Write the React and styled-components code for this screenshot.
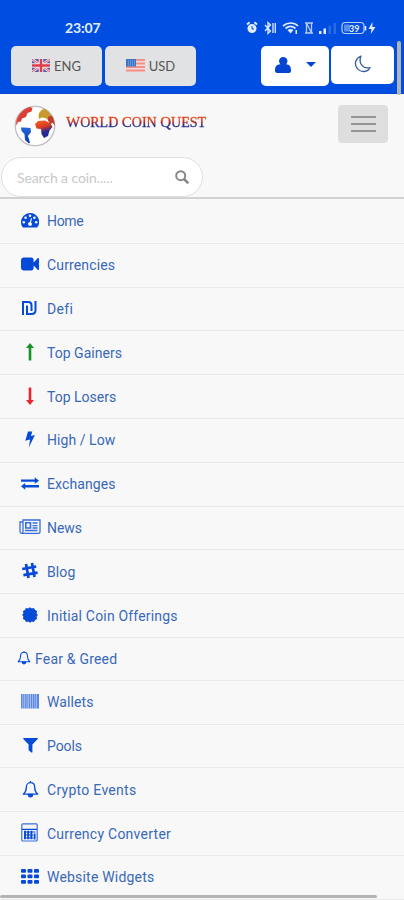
import React from "react";
import styled, { createGlobalStyle } from "styled-components";

const GlobalStyle = createGlobalStyle`
	*{
		box-sizing:border-box;
	}
	body{
		margin:0;
		background:#f8f8f8;
		font-family:"Lato", sans-serif;
	}
	button{
		padding:0;
		border:0;
		font-family:inherit;
		cursor:pointer;
	}
	svg{
		display:block;
		flex:none;
	}
`;

const Wrap = styled.div`
	position:relative;
	width:404px;
	height:900px;
	overflow:hidden;
	background:#f8f8f8;
`;
const Header = styled.header`
	height:94px;
	background:#004de2;
	border-bottom:1px solid #0b45cc;
`;
const StatusBar = styled.div`
	height:46px;
	padding:9px 26px 0 65px;
	display:flex;
	align-items:center;
	justify-content:space-between;
	color:#e4edff;
`;
const Time = styled.span`
	font-size:14px;
	font-weight:700;
	letter-spacing:-0.1px;
`;
const Toolbar = styled.div`
	display:flex;
	padding:0 10px 0 11px;
	.space{
		flex:1;
	}
`;
const ToolButton = styled.button`
	width:${({$width}) => $width}px;
	height:${({$height}) => $height || 40}px;
	margin-right:${({$gap}) => $gap || 0}px;
	padding-bottom:${({$light}) => $light ? 3 : 0}px;
	display:flex;
	align-items:center;
	justify-content:center;
	gap:4px;
	border-radius:5px;
	background:${({$light}) => $light ? "#fff" : "#e1e2e3"};
	color:${({$light}) => $light ? "#0645d2" : "#555"};
	font-size:13px;
	svg{
		margin-bottom:${({$light}) => $light ? 0 : 2}px;
	}
`;
const Brand = styled.div`
	height:63px;
	padding:0 16px 0 14px;
	display:flex;
	align-items:center;
`;
const BrandName = styled.div`
	margin:-7px 0 0 10px;
	font-family:"Liberation Serif", serif;
	font-size:14px;
	font-weight:400;
	line-height:17px;
	letter-spacing:0;
	white-space:nowrap;
	background:linear-gradient(#e0441c 32%, #a22a36 50%, #252e8c 68%);
	background-clip:text;
	-webkit-background-clip:text;
	-webkit-text-stroke:0.35px transparent;
	color:transparent;
	b{
		font-size:15px;
		font-weight:400;
	}
`;
const Burger = styled.button`
	width:50px;
	height:38px;
	margin:-4px 0 0 auto;
	display:flex;
	flex-direction:column;
	align-items:center;
	justify-content:center;
	gap:5px;
	border-radius:4px;
	background:#dedede;
	span{
		width:25px;
		height:2px;
		background:#959595;
	}
`;
const SearchBox = styled.div`
	width:202px;
	height:40px;
	margin-left:1px;
	padding:0 13px 0 15px;
	display:flex;
	align-items:center;
	justify-content:space-between;
	border:1px solid #dfdfdf;
	border-radius:20px;
	background:#fff;
	color:#c8c8c8;
	font-size:14px;
	letter-spacing:-0.1px;
`;
const Menu = styled.ul`
	margin:0;
	padding:1px 0 0;
	list-style:none;
	border-top:2px solid #d2d2d2;
`;
const Item = styled.li`
	height:${({$compact}) => $compact ? 42.8 : 43.8}px;
	padding-left:${({$compact}) => $compact ? 17 : 19}px;
	display:flex;
	align-items:center;
	border-bottom:1px solid #e9e9e9;
	color:#3868b8;
	font-family:"Roboto", sans-serif;
	font-size:14px;
	letter-spacing:${({$spacing}) => $spacing}px;
	cursor:pointer;
	.icon{
		width:${({$compact}) => $compact ? 14 : 22}px;
		margin-right:${({$compact}) => $compact ? 4 : 6}px;
		margin-top:-2px;
		display:flex;
		justify-content:center;
		color:${({$color}) => $color || "#064bd8"};
	}
`;
const ScrollThumb = styled.div`
	position:absolute;
	background:#b4b4b4;
	border-radius:2px;
	${({$vertical}) => $vertical
		? "top:41px; left:397px; width:4px; height:54px;"
		: "left:0; bottom:2px; width:377px; height:3px;"}
`;

const Svg = ({w, h, children, ...rest}) => (
	<svg width={w} height={h} viewBox={`0 0 ${w} ${h}`} fill="currentColor" {...rest}>
		{children}
	</svg>
);

const bellPath = "M8.5 1v2M8.5 2.7C5.7 2.7 4.3 4.8 4.3 7.4c0 3.4-1 5-3 6.8h14.4c-2-1.8-3-3.4-3-6.8 0-2.6-1.4-4.7-4.2-4.7Z";

const Bell = ({width = 17, height = 18}) => (
	<svg width={width} height={height} viewBox="0 0 17 18" fill="none" stroke="currentColor" strokeWidth="1.3" strokeLinejoin="round">
		<path d={bellPath} />
		<path d="M6.4 14.5a2.1 2.3 0 0 0 4.2 0Z" fill="currentColor" />
	</svg>
);

const icons = {
	home: (
		<Svg w={18} h={15}>
			<path d="M9 0a9 9 0 0 0-9 9c0 2 .6 3.7 1.5 5.1.2.3.4.4.8.4h13.4c.4 0 .6-.1.8-.4A9 9 0 0 0 9 0Z" />
			<g fill="#f8f8f8">
				<circle cx="2.8" cy="9.2" r="1.3" />
				<circle cx="4.6" cy="4.7" r="1.3" />
				<circle cx="9" cy="2.7" r="1.3" />
				<circle cx="13.4" cy="4.7" r="1.3" />
				<circle cx="15.2" cy="9.2" r="1.3" />
				<path d="m10 5 1 .3-1 4.1c1 .6 1.2 1.7.8 2.5-1 1.8-3.8 1-3.7-1 .1-1 .8-1.7 1.8-1.8Z" />
			</g>
		</Svg>
	),
	video: (
		<Svg w={18} h={14}>
			<path d="M3 .5h7a2.6 2.6 0 0 1 2.6 2.7v2.3l4-4.2c.5-.5 1.4-.2 1.4.5v10.4c0 .7-.9 1-1.4.5l-4-4.2v2.3a2.6 2.6 0 0 1-2.6 2.7H3a3 3 0 0 1-3-2.7V3.2A3 3 0 0 1 3 .5Z" />
		</Svg>
	),
	shekel: (
		<Svg w={17} h={14} fill="none" stroke="currentColor" strokeWidth="2">
			<path d="M1 14V1h5.2c2 0 3.3 1.4 3.3 3.3V10M5 4.5V13h4.8c2.2 0 3.7-1.4 3.7-3.7V0" />
		</Svg>
	),
	up: (
		<Svg w={8} h={18}>
			<path d="M4 0 8 5H5.3v12.6H2.7V5H0Z" />
		</Svg>
	),
	down: (
		<Svg w={8} h={18}>
			<path d="M4 18 0 13h2.7V.4h2.6V13H8Z" />
		</Svg>
	),
	bolt: (
		<Svg w={10} h={17}>
			<path d="M3 .5h4.300L5.900 4.900l4-1L3.800 16.500 5.100 8.600.3 9.700Z" />
		</Svg>
	),
	exchange: (
		<Svg w={18} h={13}>
			<path d="M0 2.4h13.8V.2L18 3.7l-4.2 3.1V4.8H0ZM18 8v2.4H4.2v2.3L0 9.2l4.200-3.100V8Z" />
		</Svg>
	),
	news: (
		<Svg w={22} h={16} fill="none" stroke="currentColor" strokeWidth="1.3" opacity=".8">
			<path d="M4 3H1v9.6c0 1.2.7 1.8 1.6 1.8h16.8c1 0 1.6-.7 1.6-1.6V1H4v11.4c0 1.2-.4 2-1.4 2M13.5 4h5M13.5 6.7h5M13.5 9h5M6 11.5h12.5" />
			<path d="M6.8 3.8h4.7V9H6.8Z" strokeWidth="1.6" />
		</Svg>
	),
	hash: (
		<Svg w={18} h={18} fill="none" stroke="currentColor" strokeWidth="2.7">
			<path d="m5 2 2.5 14M11 1l2.5 14M1.2 7l14-2.5M2.4 13.2l14.2-2.5" />
		</Svg>
	),
	certificate: (
		<Svg w={16} h={16}>
			<path d="m8 .2 1.8 1.2 2.1-.5 1.2 2 2 1.1-.5 2.2L15.8 8l-1.2 1.8.5 2.2-2 1.1-1.2 2-2.1-.5L8 15.8l-1.8-1.2-2.1.5-1.2-2-2-1.1.5-2.2L.2 8l1.2-1.8L.9 4l2-1.1 1.2-2 2.1.5Z" />
		</Svg>
	),
	bellSmall: <Bell width={14} height={15} />,
	barcode: (
		<Svg w={20} h={15}>
			<path d="M1 0h18v14.5H1Z" opacity=".3" />
			<path d="M1 0h1.4v14.5H1ZM3.3 0h.9v14.5h-.9ZM5.2 0h1.3v14.5H5.2ZM7.4 0h.8v14.5h-.8ZM9.1 0h1v14.5h-1ZM11 0h1v14.5h-1ZM12.8 0h1.6v14.5h-1.6ZM15.2 0h1v14.5h-1ZM17 0h2v14.5h-2Z" opacity=".5" />
		</Svg>
	),
	filter: (
		<Svg w={15} h={16}>
			<path d="M1 1h13c.7 0 1 .7.5 1.2L9.4 7.4V15c0 .6-.6.8-1 .5l-2.5-2c-.2-.2-.3-.4-.3-.7V7.4L.5 2.2C0 1.7.3 1 1 1Z" />
		</Svg>
	),
	bell: <Bell />,
	calculator: (
		<Svg w={19} h={19} fill="none" stroke="currentColor" strokeWidth="1.2">
			<rect x=".8" y=".8" width="15.4" height="17.2" rx="1" opacity=".8" />
			<path d="M1 6.4h15M3 9h11.5M3 12h9M3 15h9" />
			<path d="M4 7.8v8.5M7.2 7.8v8.5M10.4 7.8v8.5M13.6 10.5v6" strokeWidth="1.9" />
		</Svg>
	),
	grid: (
		<Svg w={18} h={15}>
			{[0, 5.5, 11].map((y) => [0, 6.5, 13].map((x) => (
				<rect key={`${x}-${y}`} x={x} y={y} width="5" height="3.7" rx=".9" />
			)))}
		</Svg>
	)
};

const menuItems = [
	{name: "Home", icon: "home", spacing: -0.3},
	{name: "Currencies", icon: "video", spacing: 0.15},
	{name: "Defi", icon: "shekel", spacing: 0.3},
	{name: "Top Gainers", icon: "up", color: "#159325", spacing: 0.03},
	{name: "Top Losers", icon: "down", color: "#ec2630", spacing: 0},
	{name: "High / Low", icon: "bolt", spacing: 0.05},
	{name: "Exchanges", icon: "exchange", spacing: 0.1},
	{name: "News", icon: "news", spacing: -0.1},
	{name: "Blog", icon: "hash", spacing: 0.1},
	{name: "Initial Coin Offerings", icon: "certificate", spacing: 0.18},
	{name: "Fear & Greed", icon: "bellSmall", spacing: 0.2, compact: true},
	{name: "Wallets", icon: "barcode", spacing: 0.1},
	{name: "Pools", icon: "filter", spacing: -0.1},
	{name: "Crypto Events", icon: "bell", spacing: 0.28},
	{name: "Currency Converter", icon: "calculator", spacing: 0.25},
	{name: "Website Widgets", icon: "grid", spacing: 0.2}
];

// alarm, vibrate, wifi, nfc, signal, battery
const StatusIcons = () => (
	<Svg w={132} h={16}>
		<circle cx="6" cy="8.5" r="4.5" />
		<path d="m1 4.5 2.6-2.2M11 4.5 8.4 2.3" stroke="currentColor" strokeWidth="1.8" />
		<path d="M6 6v3h2" fill="none" stroke="#004de2" />
		<g fill="none" stroke="currentColor" strokeWidth="1.3">
			<path d="m19 5 5.5 6-2.5 2.5V2.5L24.5 5 19 11M27 3v10M29.3 3v10" />
			<path d="M37 6c4.5-4 11-4 15 0M39.5 8.5c3-2.5 7-2.5 10 0" strokeWidth="1.7" />
			<path d="M60.500 13V3l5 10V3M59 3h8M59 13h8" opacity=".8" />
		</g>
		<path d="m44.5 13.5-3-3.5c2-1.4 4-1.4 6 0ZM49.5 10H51v4h-1.5Z" />
		<path d="M73 11h2.5v3H73ZM77.5 8.5H80V14h-2.5Z" />
		<path d="M82.5 5.5H85V14h-2.5ZM87.5 3H90v11h-2.5Z" opacity=".18" />
		<rect x="96" y="2.5" width="22" height="11" rx="3.5" fill="none" stroke="currentColor" strokeWidth="1.2" opacity=".8" />
		<rect x="98" y="4.5" width="6" height="7" rx="1" opacity=".4" />
		<path d="M119.5 6v4.5" stroke="currentColor" strokeWidth="1.5" />
		<text x="103" y="11.5" fontSize="9" fontWeight="700" fontFamily="Lato, sans-serif">39</text>
		<path d="m126.5 2-4 7h3l-.8 5 4.8-7h-3.2Z" />
	</Svg>
);

const FlagUK = () => (
	<Svg w={18} h={13}>
		<path fill="#5662a8" d="M0 0h18v13H0Z" />
		<path d="m0 0 18 13M18 0 0 13" stroke="#f5dbe0" strokeWidth="2.6" />
		<path d="m0 0 18 13M18 0 0 13" stroke="#df5260" strokeWidth=".9" />
		<path d="M9 0v13M0 6.5h18" stroke="#fae9ec" strokeWidth="4.5" />
		<path d="M9 0v13M0 6.5h18" stroke="#dd3d4a" strokeWidth="2.5" />
	</Svg>
);

const FlagUS = () => (
	<Svg w={19} h={13}>
		<path fill="#f5d8d8" d="M0 0h19v13H0Z" />
		<path d="M0 1h19M0 4.5h19M0 8h19M0 11.5h19" stroke="#f0908a" strokeWidth="1.8" />
		<path fill="#3c78c6" d="M0 0h10v7.5H0Z" />
		<path d="M2 2h7M2 4h7M2 6h7" stroke="#96bce4" strokeWidth=".8" strokeDasharray="1 1" />
	</Svg>
);

const Globe = () => (
	<Svg w={42} h={42}>
		<defs>
			<linearGradient id="north" x1="0" y1="0" x2="1" y2="1">
				<stop offset="0" stopColor="#d95545" />
				<stop offset="1" stopColor="#dc2520" />
			</linearGradient>
			<linearGradient id="south" x1="0" y1="0" x2="0" y2="1">
				<stop offset="0" stopColor="#2466dd" />
				<stop offset="1" stopColor="#0b3aa8" />
			</linearGradient>
			<linearGradient id="africa" x1="0" y1="0" x2="0.3" y2="1">
				<stop offset="0" stopColor="#f06a24" />
				<stop offset=".45" stopColor="#dc3a22" />
				<stop offset=".75" stopColor="#242a94" />
			</linearGradient>
		</defs>
		<circle cx="21" cy="21" r="19.7" fill="#fff" stroke="#c1bbc4" strokeWidth="1.3" />
		<path fill="url(#north)" d="M6 8.5c3-3.5 6-5.500 10-6.500l2.500 1-1 3.500-4 1.500-1.500 4-4 1.500-1 3-3 .5-1.500 3.500C1.500 16 3.500 12 6 8.500Z" />
		<path fill="url(#south)" d="m7 22.500 3.500 0 6 .5.5 4-3 4 2 6.500-1 1-4-3.500-.5-6-3-3Z" />
		<path fill="#c99a2e" d="m24.500 12 .5-4 3-3.500 3-.5c4 2.500 7.500 7 8 11l-4 1-3.500-3-4-.5-2 1.500Z" />
		<path fill="#c23b2d" d="m34 12 3.500-1.500c2.300 3 3.200 6 3.200 10l-2.200-3-2 2-2.500-4Z" />
		<path fill="url(#africa)" d="m21 19 3-3 7-.5 5.500 3 2 3.500-3 3.500-1.500 5.500-4 2-2.500-4-.5-5-4.500-.5Z" />
	</Svg>
);

const App = () => (
	<Wrap>
		<GlobalStyle />
		<Header>
			<StatusBar>
				<Time>23:07</Time>
				<StatusIcons />
			</StatusBar>
			<Toolbar>
				<ToolButton $width={91} $gap={3}><FlagUK /> ENG</ToolButton>
				<ToolButton $width={91}><FlagUS /> USD</ToolButton>
				<span className="space" />
				<ToolButton $light $width={68} $gap={2} aria-label="account">
					<Svg w={28} h={17}>
						<path d="M12 8.3a4.2 4.2 0 1 0-5.5 0C2 8.5 1 11 1 14.5 1 16 1.8 17 3 17h12c1.5 0 2-1 2-2.5 0-3.5-1-6-5-6.2Z" />
					</Svg>
					<Svg w={10} h={5}><path d="M0 0h10L5 5Z" /></Svg>
				</ToolButton>
				<ToolButton $light $width={63} $height={38} aria-label="dark mode">
					<Svg w={17} h={18} fill="none" stroke="#315e9c" strokeWidth="1.3" strokeLinejoin="round">
						<path d="M7 1C1.5 3 0 9 3 13c3.5 5 11 4.5 13-.5C9 14.5 4 8 7 1Z" />
					</Svg>
				</ToolButton>
			</Toolbar>
		</Header>

		<Brand>
			<Globe />
			<BrandName><b>W</b>ORLD <b>C</b>OIN <b>Q</b>UEST</BrandName>
			<Burger aria-label="menu"><span /><span /><span /></Burger>
		</Brand>

		<SearchBox>
			Search a coin.....
			<Svg w={14} h={14} fill="none" stroke="#888" strokeWidth="2">
				<circle cx="5.7" cy="5.7" r="4.5" />
				<path d="m9 9 4.3 4.3" strokeWidth="2.5" />
			</Svg>
		</SearchBox>

		<Menu>
			{menuItems.map((item) => (
				<Item key={item.name} $compact={item.compact} $color={item.color} $spacing={item.spacing}>
					<span className="icon">{icons[item.icon]}</span>
					{item.name}
				</Item>
			))}
		</Menu>

		<ScrollThumb $vertical />
		<ScrollThumb />
	</Wrap>
);

export default App;
